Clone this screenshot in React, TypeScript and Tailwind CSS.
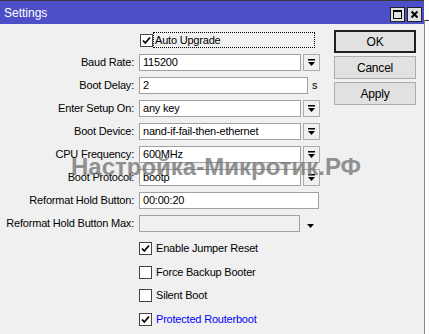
const font = { fontFamily: '"Liberation Sans", Arial, sans-serif' };

function DropArrow({ bar = true }: { bar?: boolean }) {
  return (
    <svg width="8" height="8" viewBox="0 0 8 8" className="block">
      {bar && <rect x="0" y="0" width="7" height="1.5" fill="#000" />}
      <path d="M0 3 H7 L3.5 7 Z" fill="#000" />
    </svg>
  );
}

function DropButton() {
  return (
    <div className="flex h-[17px] w-[17px] items-center justify-center border border-[#adadad] bg-[#f0f0f0] pl-[1px] pt-[1px]">
      <DropArrow />
    </div>
  );
}

function Check({ checked }: { checked: boolean }) {
  return (
    <div className="flex h-[13px] w-[13px] shrink-0 items-center justify-center border border-[#444] bg-white">
      {checked && (
        <svg width="9" height="9" viewBox="0 0 9 9">
          <path d="M1 4.5 L3.3 7 L8 1.5" stroke="#000" strokeWidth="1.8" fill="none" />
        </svg>
      )}
    </div>
  );
}

type Row = { label: string; value: string; kind: 'drop' | 'unit' | 'plain' | 'disabled' };

const rows: Row[] = [
  { label: 'Baud Rate:', value: '115200', kind: 'drop' },
  { label: 'Boot Delay:', value: '2', kind: 'unit' },
  { label: 'Enter Setup On:', value: 'any key', kind: 'drop' },
  { label: 'Boot Device:', value: 'nand-if-fail-then-ethernet', kind: 'drop' },
  { label: 'CPU Frequency:', value: '600MHz', kind: 'drop' },
  { label: 'Boot Protocol:', value: 'bootp', kind: 'drop' },
  { label: 'Reformat Hold Button:', value: '00:00:20', kind: 'plain' },
  { label: 'Reformat Hold Button Max:', value: '', kind: 'disabled' }
];

const checks = [
  { label: 'Enable Jumper Reset', checked: true, blue: false },
  { label: 'Force Backup Booter', checked: false, blue: false },
  { label: 'Silent Boot', checked: false, blue: false },
  { label: 'Protected Routerboot', checked: true, blue: true }
];

function FieldRow({ row }: { row: Row }) {
  return (
    <div className="flex h-[17px] items-center">
      <div className="w-[136px] shrink-0 pr-[2px] text-right">{row.label}</div>
      <div className="ml-[3px] flex items-center">
        {row.kind === 'drop' && (
          <>
            <div className="flex h-[17px] w-[162px] items-center border border-[#a0a0a0] bg-white px-[3px]">{row.value}</div>
            <div className="ml-[2px]">
              <DropButton />
            </div>
          </>
        )}
        {row.kind === 'unit' && (
          <>
            <div className="flex h-[17px] w-[169px] items-center border border-[#a0a0a0] bg-white px-[3px]">{row.value}</div>
            <span className="ml-[4px]">s</span>
          </>
        )}
        {row.kind === 'plain' && (
          <div className="flex h-[17px] w-[180px] items-center border border-[#a0a0a0] bg-white px-[3px]">{row.value}</div>
        )}
        {row.kind === 'disabled' && (
          <>
            <div className="h-[17px] w-[161px] border border-[#a0a0a0] bg-[#f0f0f0]" />
            <div className="ml-[7px] mt-[2px]">
              <DropArrow bar={false} />
            </div>
          </>
        )}
      </div>
    </div>
  );
}

function WinButton({ children, def }: { children: string; def?: boolean }) {
  return (
    <div
      className={`flex h-[23px] w-[82px] items-center justify-center bg-[#e1e1e1] text-[12px] ${
        def ? 'border-2 border-[#202020]' : 'border border-[#adadad]'
      }`}
    >
      {children}
    </div>
  );
}

export default function App() {
  return (
    <div className="flex h-[334px] w-[429px] overflow-hidden bg-white text-[11px] tracking-[-0.2px] text-black" style={font}>
      <div className="relative flex h-full w-[424px] flex-col border-t border-[#3a3a3a] bg-[#f0f0f0]">
        <div className="flex h-[23px] items-center justify-between bg-[#4c4fc8] pl-[4px] pr-[2px]">
          <span className="text-[12px] tracking-normal text-white">Settings</span>
          <div className="mt-[4px] flex gap-[2px]">
            <div className="flex h-[15px] w-[15px] items-center justify-center border border-[#222] bg-[#e0e0e0]">
              <div className="h-[9px] w-[9px] border border-black border-t-2" />
            </div>
            <div className="flex h-[15px] w-[15px] items-center justify-center border border-[#222] bg-[#e0e0e0]">
              <svg width="9" height="9" viewBox="0 0 9 9">
                <path d="M1.5 1.5 L7.5 7.5 M7.5 1.5 L1.5 7.5" stroke="#000" strokeWidth="2" />
              </svg>
            </div>
          </div>
        </div>

        <div className="flex flex-1">
          <div className="w-[330px] pt-[8px]">
            <div className="flex h-[16px] items-center pl-[140px]">
              <Check checked />
              <div className="flex h-[16px] w-[162px] items-center border border-dotted border-black pl-[1px]">Auto Upgrade</div>
            </div>
            <div className="mt-[6px] flex flex-col gap-[6px]">
              {rows.map((r) => (
                <FieldRow key={r.label} row={r} />
              ))}
            </div>
            <div className="mt-[10px] flex flex-col gap-[10.5px] pl-[139px]">
              {checks.map((c) => (
                <div key={c.label} className="flex h-[13px] items-center gap-[4px]">
                  <Check checked={c.checked} />
                  <span className={c.blue ? 'text-[#0000ff]' : ''}>{c.label}</span>
                </div>
              ))}
            </div>
          </div>
          <div className="flex flex-col gap-[3px] pl-[4px] pt-[6px]">
            <WinButton def>OK</WinButton>
            <WinButton>Cancel</WinButton>
            <WinButton>Apply</WinButton>
          </div>
        </div>

        <div className="pointer-events-none absolute left-[71px] top-[148px] text-[24px] font-bold tracking-normal text-[#707070] opacity-75">
          Настройка-Микротик.РФ
        </div>
      </div>
      <div className="mt-[20px] h-full w-[1px] bg-[#888]" />
      <div className="mt-[20px] h-[1px] flex-1 bg-[#333]" />
    </div>
  );
}
